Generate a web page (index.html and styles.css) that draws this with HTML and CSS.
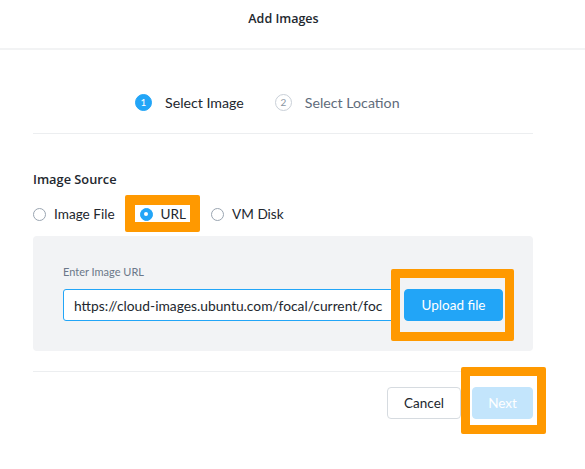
FILE: index.html
```html
<!DOCTYPE html>
<html>
<head>
<meta charset="utf-8">
<link rel="stylesheet" href="styles.css">
</head>
<body>
<div class="modal">
  <div class="header">Add Images</div>
  <div class="main">
    <div class="steps">
      <div class="step active"><span class="num">1</span><span class="label">Select Image</span></div>
      <div class="step"><span class="num">2</span><span class="label">Select Location</span></div>
    </div>
    <div class="divider"></div>
    <div class="section-title">Image Source</div>
    <div class="radios">
      <label class="radio"><span class="dot"></span>Image File</label>
      <label class="radio checked"><span class="dot"></span>URL</label>
      <label class="radio"><span class="dot"></span>VM Disk</label>
    </div>
    <div class="panel">
      <div class="field-label">Enter Image URL</div>
      <div class="field-row">
        <div class="input">https://cloud-images.ubuntu.com/focal/current/foc</div>
        <button class="btn primary">Upload file</button>
      </div>
    </div>
    <div class="divider bottom"></div>
    <div class="footer">
      <button class="btn cancel">Cancel</button>
      <button class="btn next">Next</button>
    </div>
  </div>
  <div class="mark mark-url"></div>
  <div class="mark mark-upload"></div>
  <div class="mark mark-next"></div>
</div>
</body>
</html>
```
FILE: styles.css
```css
* { box-sizing: border-box; }
html, body { margin: 0; padding: 0; background: #fff; }
body {
  font-family: Lato, "Open Sans", "Liberation Sans", sans-serif;
  color: #22272e;
  font-size: 13px;
}
.modal { position: relative; width: 585px; height: 469px; overflow: hidden; }
.header {
  height: 50px;
  border-bottom: 2px solid #f2f3f4;
  display: flex;
  align-items: center;
  justify-content: center;
  font-family: "Open Sans", Lato, sans-serif;
  font-weight: 600;
  font-size: 12.5px;
  padding-bottom: 12px;
  padding-right: 18px;
}
.main { padding: 0 52px 0 33px; }
.steps {
  display: flex;
  align-items: center;
  gap: 31px;
  height: 24px;
  margin-top: 40px;
  margin-bottom: 19px;
  padding-left: 102px;
}
.step { display: flex; align-items: center; gap: 13px; color: #5f6c7b; font-size: 14.2px; }
.step .num {
  width: 17px; height: 17px; border-radius: 50%;
  border: 1px solid #c9d0d8;
  display: flex; align-items: center; justify-content: center;
  font-size: 10px; color: #8a96a3;
}
.step.active { color: #22272e; }
.step.active .num { background: #22a5f7; border-color: #22a5f7; color: #fff; }
.divider { height: 1px; background: #eceef0; }
.divider.bottom { margin-top: 20px; }
.section-title {
  margin-top: 37px;
  line-height: 16px;
  font-family: "Open Sans", Lato, sans-serif;
  font-weight: 600;
  font-size: 12.8px;
}
.radios {
  display: flex;
  align-items: center;
  height: 20px;
  margin-top: 17px;
  gap: 25px;
}
.radio { display: flex; align-items: center; gap: 8px; font-size: 13.6px; color: #22272e; }
.radio .dot {
  width: 13px; height: 13px; border-radius: 50%;
  border: 1px solid #9aa5b1; background: #fff;
  display: inline-block; position: relative;
}
.radio.checked .dot { background: #22a5f7; border-color: #22a5f7; }
.radio.checked .dot::after {
  content: ""; position: absolute; left: 3.5px; top: 3.5px;
  width: 4px; height: 4px; border-radius: 50%; background: #fff;
}
.panel {
  margin-top: 12px;
  background: #f2f3f5;
  border-radius: 4px;
  padding: 29px 30px 30px 30px;
  height: 115px;
}
.field-label { font-size: 11px; line-height: 14px; color: #6b7889; }
.field-row { display: flex; gap: 8px; margin-top: 10px; }
.input {
  width: 333px; height: 32px;
  background: #fff;
  border: 1px solid #22a5f7;
  border-radius: 3px;
  padding: 0 10px;
  display: flex; align-items: center;
  font-size: 13.8px;
  white-space: nowrap; overflow: hidden;
  color: #22272e;
}
.btn {
  font-family: inherit;
  height: 32px;
  border-radius: 4px;
  font-size: 13.5px;
  border: 1px solid transparent;
  padding: 0;
  cursor: pointer;
}
.btn.primary { width: 99px; background: #22a5f7; color: #fff; border-color: #22a5f7; }
.footer { display: flex; justify-content: flex-end; gap: 11px; margin-top: 15px; }
.btn.cancel { width: 74px; background: #fff; border-color: #d6dbe0; color: #22272e; }
.btn.next { width: 61px; background: #c3e5fc; border-color: #c3e5fc; color: #fff; }
.mark { position: absolute; border: 10px solid #ff9900; border-radius: 2px; }
.mark-url { left: 125px; top: 195px; width: 75px; height: 37px; }
.mark-upload { left: 391px; top: 269px; width: 123px; height: 72px; border-width: 9px; }
.mark-next { left: 461px; top: 367px; width: 85px; height: 67px; border-width: 9px; }
```
